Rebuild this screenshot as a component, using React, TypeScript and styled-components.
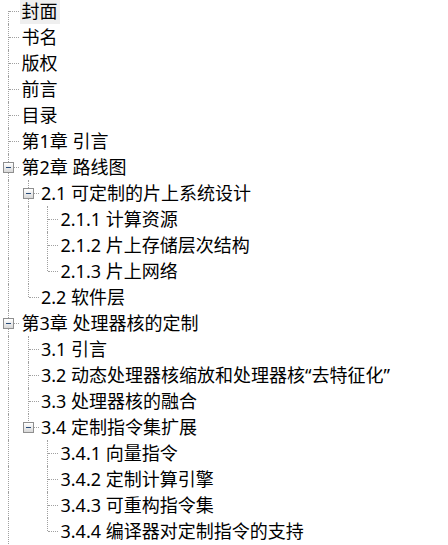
import React from 'react';
import styled, { createGlobalStyle } from 'styled-components';

type TreeNode = { label: string; children?: TreeNode[]; selected?: boolean };

const data: TreeNode[] = [
  { label: '封面', selected: true },
  { label: '书名' },
  { label: '版权' },
  { label: '前言' },
  { label: '目录' },
  { label: '第1章 引言' },
  {
    label: '第2章 路线图',
    children: [
      {
        label: '2.1 可定制的片上系统设计',
        children: [
          { label: '2.1.1 计算资源' },
          { label: '2.1.2 片上存储层次结构' },
          { label: '2.1.3 片上网络' },
        ],
      },
      { label: '2.2 软件层' },
    ],
  },
  {
    label: '第3章 处理器核的定制',
    children: [
      { label: '3.1 引言' },
      { label: '3.2 动态处理器核缩放和处理器核“去特征化”' },
      { label: '3.3 处理器核的融合' },
      {
        label: '3.4 定制指令集扩展',
        children: [
          { label: '3.4.1 向量指令' },
          { label: '3.4.2 定制计算引擎' },
          { label: '3.4.3 可重构指令集' },
          { label: '3.4.4 编译器对定制指令的支持' },
        ],
      },
    ],
  },
];

// the root list continues below the visible area
const ROOT_CONTINUES = true;

const GlobalStyle = createGlobalStyle`
  html, body {
    margin: 0;
    padding: 0;
    background: #ffffff;
    overflow: hidden;
  }
  body {
    font-family: "Noto Sans", "Noto Sans CJK SC", sans-serif;
    color: #000000;
  }
`;

const LINE = '1px dotted #a0a0a0';

const Tree = styled.div`
  display: flex;
  flex-direction: column;
  margin-top: -2px;
`;

const Row = styled.div`
  display: flex;
  align-items: center;
  height: 26px;
`;

const Guide = styled.div<{ $line: boolean }>`
  position: relative;
  flex: none;
  width: 19.5px;
  height: 100%;
  &::before {
    content: '';
    display: ${(p) => (p.$line ? 'block' : 'none')};
    position: absolute;
    left: 8px;
    top: 0;
    bottom: 0;
    border-left: ${LINE};
  }
`;

const Connector = styled.div<{ $first: boolean; $last: boolean }>`
  position: relative;
  flex: none;
  width: 19.5px;
  height: 100%;
  &::before {
    content: '';
    position: absolute;
    left: 8px;
    top: ${(p) => (p.$first ? '13px' : '0')};
    bottom: ${(p) => (p.$last ? '13px' : '0')};
    border-left: ${LINE};
  }
  &::after {
    content: '';
    position: absolute;
    left: 9px;
    top: 13px;
    width: 10px;
    border-top: ${LINE};
  }
`;

const ExpandBox = styled.span`
  position: absolute;
  z-index: 1;
  left: 3px;
  top: 8px;
  width: 9px;
  height: 9px;
  border: 1px solid #8f8f8f;
  background: linear-gradient(#ffffff, #d8d8d8);
  &::after {
    content: '';
    position: absolute;
    left: 2px;
    top: 4px;
    width: 5px;
    height: 1px;
    background: #274a78;
  }
`;

const Label = styled.span<{ $selected: boolean }>`
  align-self: flex-end;
  display: flex;
  align-items: flex-start;
  height: 24px;
  padding: 0 2px;
  font-size: 18px;
  line-height: 22px;
  white-space: nowrap;
  background: ${(p) => (p.$selected ? '#efefef' : 'transparent')};
`;

type Flat = {
  node: TreeNode;
  guides: boolean[];
  first: boolean;
  last: boolean;
};

function flatten(nodes: TreeNode[], guides: boolean[], out: Flat[], isRoot: boolean) {
  nodes.forEach((node, i) => {
    const last = i === nodes.length - 1 && !(isRoot && ROOT_CONTINUES);
    out.push({ node, guides, first: isRoot && i === 0, last });
    if (node.children) flatten(node.children, [...guides, !last], out, false);
  });
  return out;
}

export default function App() {
  const rows = flatten(data, [], [], true);
  return (
    <>
      <GlobalStyle />
      <Tree>
        {rows.map((r, idx) => (
          <Row key={idx}>
            {r.guides.map((g, j) => (
              <Guide key={j} $line={g} />
            ))}
            <Connector $first={r.first} $last={r.last}>
              {r.node.children && <ExpandBox />}
            </Connector>
            <Label $selected={!!r.node.selected}>{r.node.label}</Label>
          </Row>
        ))}
      </Tree>
    </>
  );
}
